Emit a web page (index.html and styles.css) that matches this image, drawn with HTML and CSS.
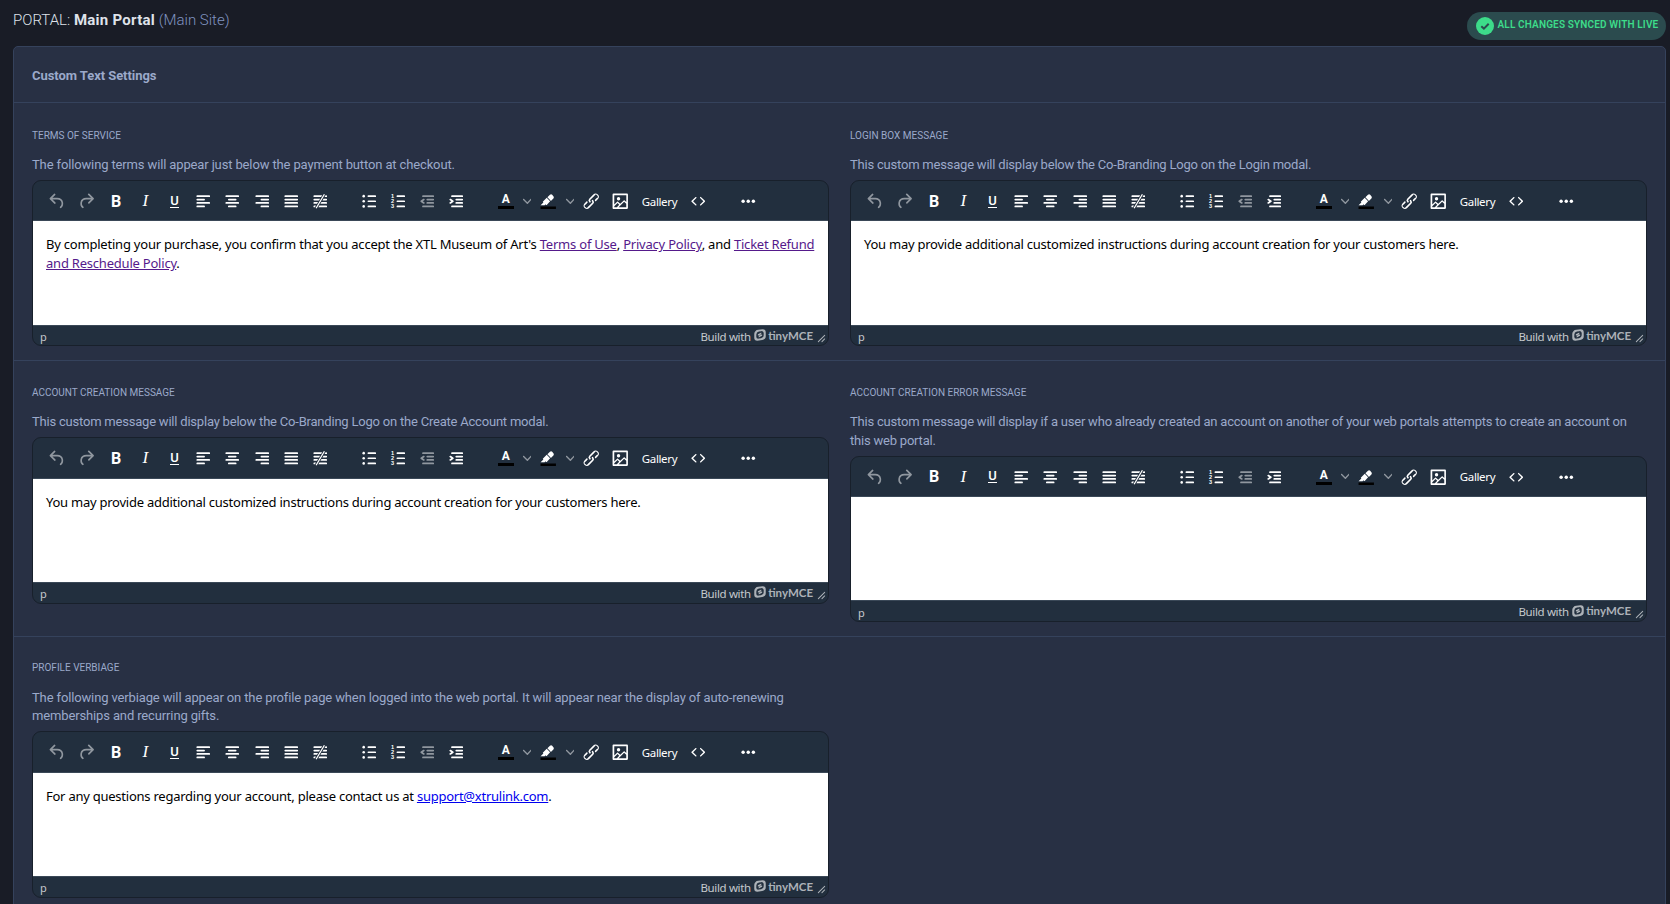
FILE: index.html
```html
<!DOCTYPE html>
<html lang="en">
<head>
    <meta charset="UTF-8">
    <meta name="viewport" content="width=device-width, initial-scale=1.0">
    <title>Custom Text Settings</title>
    <link rel="stylesheet" href="styles.css">
</head>
<body>
    <svg class="sprite" width="0" height="0">
        <symbol id="i-undo" viewBox="0 0 24 24"><path d="M6.4 8H12c3.7 0 6.2 2 6.8 5.1.6 2.7-.4 5.6-2.3 6.8a1 1 0 0 1-1-1.8c1.1-.6 1.8-2.7 1.4-4.6-.5-2.1-2.1-3.5-4.9-3.5H6.4l3.3 3.3a1 1 0 1 1-1.4 1.4l-5-5a1 1 0 0 1 0-1.4l5-5a1 1 0 0 1 1.4 1.4L6.4 8Z"/></symbol>
        <symbol id="i-redo" viewBox="0 0 24 24"><path d="M17.6 10H12c-2.8 0-4.4 1.4-4.9 3.5-.4 2 .3 4 1.4 4.6a1 1 0 1 1-1 1.8c-2-1.2-2.9-4.1-2.3-6.8.6-3 3-5.1 6.8-5.1h5.6l-3.3-3.3a1 1 0 1 1 1.4-1.4l5 5a1 1 0 0 1 0 1.4l-5 5a1 1 0 0 1-1.4-1.4l3.3-3.3Z"/></symbol>
        <symbol id="i-left" viewBox="0 0 24 24"><path class="ln" d="M5 6h14M5 10h8M5 14h14M5 18h8"/></symbol>
        <symbol id="i-center" viewBox="0 0 24 24"><path class="ln" d="M5 6h14M8 10h8M5 14h14M8 18h8"/></symbol>
        <symbol id="i-right" viewBox="0 0 24 24"><path class="ln" d="M5 6h14M11 10h8M5 14h14M11 18h8"/></symbol>
        <symbol id="i-justify" viewBox="0 0 24 24"><path class="ln" d="M5 6h14M5 10h14M5 14h14M5 18h14"/></symbol>
        <symbol id="i-none" viewBox="0 0 24 24"><path d="M14.2 5 13 7H5a1 1 0 1 1 0-2h9.2Zm4 0h.8a1 1 0 0 1 0 2h-2l1.2-2Zm-6.4 4-1.2 2H5a1 1 0 0 1 0-2h6.8Zm4 0H19a1 1 0 0 1 0 2h-4.4l1.2-2Zm-6.4 4-1.2 2H5a1 1 0 0 1 0-2h4.4Zm4 0H19a1 1 0 0 1 0 2h-6.8l1.2-2ZM7 17l-1.2 2H5a1 1 0 0 1 0-2h2Zm4 0h8a1 1 0 0 1 0 2H9.8l1.2-2Zm5.2-13.5 1.3.7-9.7 16.3-1.3-.7 9.7-16.3Z"/></symbol>
        <symbol id="i-ul" viewBox="0 0 24 24"><path class="ln" d="M11 6h8M11 12h8M11 18h8"/><circle cx="5.5" cy="6" r="1.5"/><circle cx="5.5" cy="12" r="1.5"/><circle cx="5.5" cy="18" r="1.5"/></symbol>
        <symbol id="i-ol" viewBox="0 0 24 24"><path class="ln" d="M11 6h8M11 12h8M11 18h8"/><text x="3.6" y="8.3">1</text><text x="3.6" y="14.3">2</text><text x="3.6" y="20.3">3</text></symbol>
        <symbol id="i-outdent" viewBox="0 0 24 24"><path class="ln" d="M7 6h12M12 10h7M12 14h7M7 18h12"/><path d="M8.6 13.2a1 1 0 0 1-1.2 1.6l-3-2a1 1 0 0 1 0-1.6l3-2a1 1 0 0 1 1.2 1.6L6.8 12l1.8 1.2Z"/></symbol>
        <symbol id="i-indent" viewBox="0 0 24 24"><path class="ln" d="M7 6h12M12 10h7M12 14h7M7 18h12"/><path d="M4.4 13.2 6.2 12l-1.8-1.2a1 1 0 0 1 1.2-1.6l3 2a1 1 0 0 1 0 1.6l-3 2a1 1 0 1 1-1.2-1.6Z"/></symbol>
        <symbol id="i-pen" viewBox="0 0 24 24"><path fill="#000" d="M3 18h18v3H3z"/><path d="M7.7 16.7H3l3.3-3.3-.7-.8L10.2 8l4 4.1-4 4.2c-.2.2-.6.2-.8 0l-.6-.7-1.1 1.1Zm5-7.5L11 7.4l3-2.9a2 2 0 0 1 2.6 0L18 6c.7.7.7 2 0 2.7l-2.9 2.9-1.8-1.8-.5-.6Z"/></symbol>
        <symbol id="i-link" viewBox="0 0 24 24"><path d="M6.2 12.3a1 1 0 0 1 1.4 1.4l-2 2a2 2 0 1 0 2.6 2.8l4.8-4.8a1 1 0 0 0 0-1.4 1 1 0 1 1 1.4-1.3 2.9 2.9 0 0 1 0 4L9.6 20a3.9 3.9 0 0 1-5.5-5.5l2-2Zm11.6-.6a1 1 0 0 1-1.4-1.4l2-2a2 2 0 1 0-2.6-2.8L11 10.3a1 1 0 0 0 0 1.4A1 1 0 1 1 9.6 13a2.9 2.9 0 0 1 0-4L14.4 4a3.9 3.9 0 0 1 5.5 5.5l-2 2Z"/></symbol>
        <symbol id="i-image" viewBox="0 0 24 24"><path fill-rule="evenodd" d="m5 15.7 3.3-3.2c.3-.3.7-.3 1 0L12 15l4.1-4c.3-.4.8-.4 1 0l2 1.9V5H5v10.7ZM5 18V19h3l2.8-2.9-2-2L5 17.9Zm14-3-2.5-2.4-6.4 6.5H19v-4ZM4 3h16c.6 0 1 .4 1 1v16c0 .6-.4 1-1 1H4a1 1 0 0 1-1-1V4c0-.6.4-1 1-1Zm6 8a2 2 0 1 0 0-4 2 2 0 0 0 0 4Z"/></symbol>
        <symbol id="i-code" viewBox="0 0 24 24"><path d="M9.8 15.7c.3.3.3.8 0 1-.3.4-.9.4-1.2 0l-4.4-4.1a.8.8 0 0 1 0-1.2l4.4-4.2c.3-.3.9-.3 1.2 0 .3.3.3.8 0 1.1L6 12l3.8 3.7ZM14.2 15.7c-.3.3-.3.8 0 1 .4.4.9.4 1.2 0l4.4-4.1c.3-.3.3-.9 0-1.2l-4.4-4.2a.8.8 0 0 0-1.2 0c-.3.3-.3.8 0 1.1L18 12l-3.8 3.7Z"/></symbol>
        <symbol id="i-more" viewBox="0 0 24 24"><circle cx="6" cy="12" r="2"/><circle cx="12" cy="12" r="2"/><circle cx="18" cy="12" r="2"/></symbol>
        <symbol id="i-chevron" viewBox="0 0 10 10"><path d="M8.7 2.2c.3-.3.8-.3 1 0 .4.4.4.9 0 1.2L5.7 7.8c-.3.3-.9.3-1.2 0L.2 3.4a.8.8 0 0 1 0-1.2c.3-.3.8-.3 1.1 0L5 6l3.7-3.8Z"/></symbol>
        <symbol id="i-tiny" viewBox="0 0 14 14"><path fill-rule="evenodd" d="M5 1 10 .3A3.6 3.6 0 0 1 13.7 4V8A4.500 4.500 0 0 1 9.500 12.800L4 13.700A3.600 3.600 0 0 1 .3 10V6A4.800 4.800 0 0 1 5 1ZM5.800 2.900A3.600 3.600 0 0 0 2.700 6.400V8.500A2.500 2.500 0 0 0 5.500 11.200L8.200 10.800A3.600 3.600 0 0 0 11.300 7.400V5.300A2.500 2.500 0 0 0 8.500 2.500ZM4.500 6.200 8.500 4.200V5.700L6.500 6.700 9.500 6.300V7.800L5.500 9.800V8.300L7.500 7.300 4.500 7.700Z"/></symbol>
        <symbol id="i-resize" viewBox="0 0 10 10"><path d="M8.100 1.100A.5.5 0 1 1 8.900 1.900L1.900 8.900A.5.5 0 1 1 1.100 8.100L8.100 1.100ZM8.100 5.100A.5.5 0 1 1 8.900 5.900L5.900 8.900A.5.5 0 1 1 5.100 8.100L8.100 5.100Z"/></symbol>
    </svg>

    <header class="topbar">
        <h1 class="portal-title"><span class="prefix">PORTAL:</span> <b>Main Portal</b> <span class="site">(Main Site)</span></h1>
        <div class="sync-badge">
            <svg class="check" viewBox="0 0 18 18"><circle cx="9" cy="9" r="9"/><path d="M5.300 9.200 7.900 11.600 12.700 6.700"/></svg>
            <span>ALL CHANGES SYNCED WITH LIVE</span>
        </div>
    </header>

    <main class="card">
        <div class="card-header">Custom Text Settings</div>

        <section class="row">
            <div class="field">
                <label>TERMS OF SERVICE</label>
                <p class="desc wide">The following terms will appear just below the payment button at checkout.</p>
                <div class="editor">
                    <div class="content terms">By completing your purchase, you confirm that you accept the XTL Museum of Art's <a class="visited" href="#">Terms of Use</a>, <a class="visited" href="#">Privacy Policy</a>, and <a class="visited" href="#">Ticket Refund<br>and Reschedule Policy</a>.</div>
                </div>
            </div>
            <div class="field">
                <label>LOGIN BOX MESSAGE</label>
                <p class="desc">This custom message will display below the Co-Branding Logo on the Login modal.</p>
                <div class="editor">
                    <div class="content">You may provide additional customized instructions during account creation for your customers here.</div>
                </div>
            </div>
        </section>

        <section class="row">
            <div class="field">
                <label>ACCOUNT CREATION MESSAGE</label>
                <p class="desc">This custom message will display below the Co-Branding Logo on the Create Account modal.</p>
                <div class="editor">
                    <div class="content">You may provide additional customized instructions during account creation for your customers here.</div>
                </div>
            </div>
            <div class="field">
                <label>ACCOUNT CREATION ERROR MESSAGE</label>
                <p class="desc">This custom message will display if a user who already created an account on another of your web portals attempts to create an account on<br>this web portal.</p>
                <div class="editor">
                    <div class="content"></div>
                </div>
            </div>
        </section>

        <section class="row">
            <div class="field">
                <label>PROFILE VERBIAGE</label>
                <p class="desc wide">The following verbiage will appear on the profile page when logged into the web portal. It will appear near the display of auto-renewing<br>memberships and recurring gifts.</p>
                <div class="editor">
                    <div class="content">For any questions regarding your account, please contact us at <a href="#">support@xtrulink.com</a>.</div>
                </div>
            </div>
        </section>
    </main>

    <template id="toolbar">
        <div class="toolbar">
            <div class="group">
                <button class="off"><svg><use href="#i-undo"/></svg></button>
                <button class="off"><svg><use href="#i-redo"/></svg></button>
                <button class="bold">B</button>
                <button class="italic">I</button>
                <button class="underline"><span>U</span></button>
                <button><svg><use href="#i-left"/></svg></button>
                <button><svg><use href="#i-center"/></svg></button>
                <button><svg><use href="#i-right"/></svg></button>
                <button><svg><use href="#i-justify"/></svg></button>
                <button><svg><use href="#i-none"/></svg></button>
            </div>
            <div class="group">
                <button><svg><use href="#i-ul"/></svg></button>
                <button><svg><use href="#i-ol"/></svg></button>
                <button class="off"><svg><use href="#i-outdent"/></svg></button>
                <button><svg><use href="#i-indent"/></svg></button>
            </div>
            <div class="group">
                <button class="forecolor"><span>A</span></button>
                <button class="arrow"><svg><use href="#i-chevron"/></svg></button>
                <button><svg><use href="#i-pen"/></svg></button>
                <button class="arrow"><svg><use href="#i-chevron"/></svg></button>
                <button><svg><use href="#i-link"/></svg></button>
                <button><svg><use href="#i-image"/></svg></button>
                <button class="gallery">Gallery</button>
                <button><svg><use href="#i-code"/></svg></button>
            </div>
            <div class="group">
                <button><svg><use href="#i-more"/></svg></button>
            </div>
        </div>
    </template>

    <template id="statusbar">
        <div class="statusbar">
            <span class="path">p</span>
            <span class="build">Build with</span>
            <svg class="tiny-icon"><use href="#i-tiny"/></svg>
            <span class="tiny-name">tinyMCE</span>
            <svg class="resize"><use href="#i-resize"/></svg>
        </div>
    </template>

    <script>
        const toolbar = document.getElementById('toolbar');
        const statusbar = document.getElementById('statusbar');
        document.querySelectorAll('.editor').forEach(editor => {
            editor.prepend(toolbar.content.cloneNode(true));
            editor.append(statusbar.content.cloneNode(true));
        });
    </script>
</body>
</html>
```
FILE: styles.css
```css
* {
    margin: 0;
    padding: 0;
    box-sizing: border-box;
}

body {
    font-family: Roboto, "Liberation Sans", sans-serif;
    font-size: 13px;
    background: #191c26;
    color: #9ba9ca;
    height: 904px;
    padding: 0 4px 0 13px;
    overflow: hidden;
}

.sprite {
    display: none;
}

.topbar {
    height: 46px;
    display: flex;
    justify-content: space-between;
}

.portal-title {
    padding-top: 11px;
    font-size: 15px;
    line-height: 18px;
    font-weight: 400;
    color: #dfe2ea;
}

.portal-title .prefix,
.portal-title .site {
    font-weight: 300;
}

.portal-title b {
    font-weight: 700;
    letter-spacing: 0.26px;
}

.portal-title .site {
    color: #8093c0;
}

.sync-badge {
    margin-top: 12px;
    width: 199px;
    height: 28px;
    padding-left: 9px;
    border-radius: 14px;
    background: #2b4b4e;
    color: #3ddc8a;
    display: flex;
    align-items: center;
    gap: 3.5px;
    font-size: 10px;
    font-weight: 600;
    letter-spacing: 0.15px;
    white-space: nowrap;
}

.sync-badge span {
    margin-top: -3px;
}

.check {
    width: 18px;
    height: 18px;
    fill: #3ddc8a;
}

.check path {
    fill: none;
    stroke: #2b4b4e;
    stroke-width: 2;
}

.card {
    height: 900px;
    background: #283044;
    border: 1px solid #35425c;
    border-radius: 5px;
}

.card-header {
    height: 56px;
    padding: 0 18px;
    border-bottom: 1px solid #35425c;
    font-weight: 700;
    line-height: 57px;
    letter-spacing: -0.06px;
}

.row {
    display: grid;
    grid-template-columns: repeat(2, minmax(0, 1fr));
    gap: 21px;
    padding: 22.6px 18px 13.8px;
    border-bottom: 1px solid #35425c;
}

.card-header + .row {
    padding-top: 23.6px;
}

.row:last-child {
    border-bottom: none;
}

label {
    display: block;
    height: 29.4px;
    font-size: 10px;
    line-height: 17px;
}

.desc {
    line-height: 18.4px;
    margin-bottom: 5.6px;
    letter-spacing: -0.21px;
    white-space: nowrap;
}

.desc.wide {
    letter-spacing: -0.135px;
}

.editor {
    height: 166.4px;
    border: 1px solid #18202b;
    border-radius: 9px;
    background: #222f3e;
    overflow: hidden;
    display: flex;
    flex-direction: column;
    font-family: "Noto Sans", "Open Sans", sans-serif;
}

.toolbar {
    height: 40.4px;
    flex: none;
    padding: 1px 0 0 10.3px;
    border-bottom: 1px solid #3a4857;
    display: flex;
    align-items: center;
    gap: 20px;
}

.group {
    display: flex;
}

.group button {
    width: 29.15px;
    height: 29px;
    border: none;
    background: none;
    color: #fff;
    display: flex;
    align-items: center;
    justify-content: center;
    font-family: inherit;
}

.group svg {
    width: 20.5px;
    height: 20.5px;
    fill: currentColor;
}

symbol text {
    font: 700 6.5px "Liberation Sans", sans-serif;
}

.ln {
    fill: none;
    stroke: currentColor;
    stroke-width: 2;
    stroke-linecap: round;
}

.group .off {
    padding-right: 1.5px;
    color: #90979f;
}

.group .bold {
    font: 700 16px Roboto, sans-serif;
}

.group .italic {
    font: italic 400 17px "Liberation Serif", serif;
}

.group .underline {
    font: 500 13px Roboto, sans-serif;
}

.underline span {
    border-bottom: 1.5px solid #fff;
    line-height: 12px;
}

.group .forecolor {
    font: 700 12px Roboto, sans-serif;
}

.forecolor span {
    width: 15.4px;
    height: 16px;
    line-height: 13px;
    border-bottom: 3px solid #000;
}

.group .arrow {
    width: 13.5px;
    color: #90979f;
}

.group .arrow svg {
    width: 8.6px;
    height: 8.6px;
}

.group .gallery {
    width: 49.3px;
    font-size: 11.5px;
    letter-spacing: -0.35px;
}

.content {
    height: 103.4px;
    flex: none;
    padding: 14px 13px;
    background: #fff;
    color: #000;
    font-size: 13px;
    line-height: 19px;
    letter-spacing: -0.245px;
    white-space: nowrap;
}

.content.terms {
    letter-spacing: -0.215px;
}

.content a {
    color: #0000ee;
}

.content .visited {
    color: #551a8b;
}

.statusbar {
    flex: 1;
    border-top: 1px solid #3a4857;
    padding: 0 2px 0 7px;
    display: flex;
    align-items: center;
    color: #c5c9cd;
    font-size: 11.5px;
    line-height: 18px;
}

.path {
    flex: 1;
    height: 17px;
    line-height: 20px;
    font-size: 11px;
    overflow: hidden;
}

.build {
    margin-right: 3.5px;
    padding-top: 2px;
    letter-spacing: -0.36px;
}

.tiny-icon {
    width: 12px;
    height: 12px;
    margin-top: -1px;
    fill: #adb2b8;
}

.tiny-name {
    margin-left: 2px;
    font: 700 11.5px/18px Lato, sans-serif;
    color: #adb2b8;
}

.resize {
    width: 9px;
    height: 9px;
    margin: 6px 0 0 4px;
    fill: #adb2b8;
}
```
